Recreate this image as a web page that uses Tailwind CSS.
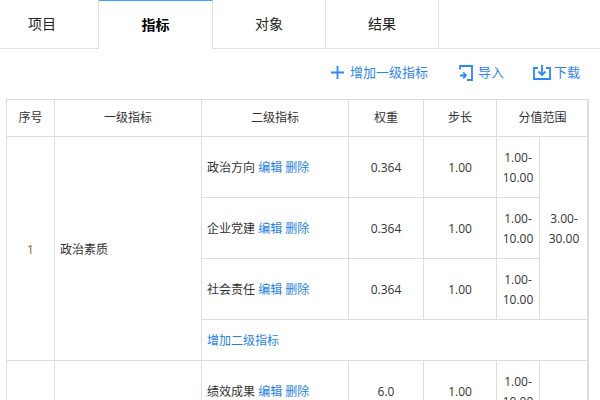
<!DOCTYPE html>
<html lang="zh-CN">
<head>
    <meta charset="UTF-8">
    <title>指标</title>
    <script src="https://cdn.jsdelivr.net/npm/@tailwindcss/browser@4"></script>
</head>
<body class="h-[400px] w-[600px] overflow-hidden bg-white font-['Open_Sans','Noto_Sans_CJK_SC',sans-serif] text-xs text-[#333]">
    <!-- Tabs -->
    <div class="flex h-[49px] border-b border-[#e0e0e0] text-sm text-[#222]">
        <div class="flex w-[99px] items-center justify-center border-r border-[#e0e0e0] pr-[14px] pb-[1px]">项目</div>
        <div class="-mb-px flex h-[49px] w-[114px] items-center justify-center border-t border-r border-t-[#409eff] border-r-[#e0e0e0] bg-white font-bold text-black">指标</div>
        <div class="flex w-[113px] items-center justify-center border-r border-[#e0e0e0] pb-[1px]">对象</div>
        <div class="flex w-[113px] items-center justify-center border-r border-[#e0e0e0] pb-[1px]">结果</div>
    </div>

    <!-- Toolbar -->
    <div class="flex h-[50px] items-center justify-end pr-[20px] pb-[2px] text-[13px] text-[#2f86ea]">
        <button class="flex items-center">
            <svg class="mr-[6px] h-[13px] w-[13px]" viewBox="0 0 13 13" fill="none" stroke="#2c8af0" stroke-width="1.8"><path d="M6.500 0v13M0 6.500h13"/></svg>
            增加一级指标
        </button>
        <button class="ml-[31px] flex items-center">
            <svg class="mr-[5px] h-[16px] w-[14px]" viewBox="0 0 14 16" fill="none" stroke="#2c8af0" stroke-width="1.8"><path d="M1 4.500V1h12v14H8"/><path d="M1 10.500h6M4.200 7.500 7 10.500l-2.800 3"/></svg>
            导入
        </button>
        <button class="ml-[29px] flex items-center">
            <svg class="mr-[3px] h-[15px] w-[18px]" viewBox="0 0 18 15" fill="none" stroke="#2c8af0" stroke-width="1.8"><path d="M5 3H1v11h16V3h-4"/><path d="M9 0v10M5.500 6.500 9 10l3.500-3.500"/></svg>
            下载
        </button>
    </div>

    <!-- Table -->
    <div class="ml-[6px] w-[583px] border-r-2 border-[#ddd]">
        <table class="w-[582px] table-fixed border-collapse [&_td]:border [&_td]:border-[#ddd] [&_th]:border [&_th]:border-[#ddd]">
            <colgroup>
                <col class="w-[48px]"><col class="w-[147px]"><col class="w-[147px]"><col class="w-[75px]"><col class="w-[73px]"><col class="w-[43px]"><col class="w-[49px]">
            </colgroup>
            <thead>
                <tr class="h-[37px] text-center font-normal">
                    <th class="font-normal">序号</th>
                    <th class="font-normal">一级指标</th>
                    <th class="font-normal">二级指标</th>
                    <th class="font-normal">权重</th>
                    <th class="font-normal">步长</th>
                    <th class="font-normal" colspan="2">分值范围</th>
                </tr>
            </thead>
            <tbody class="leading-[20px] [&_td]:pt-[2px]">
                <tr class="h-[61px]">
                    <td class="text-center text-[#8a5a20]" rowspan="4">1</td>
                    <td class="px-[5px]" rowspan="4">政治素质</td>
                    <td class="px-[5px]">政治方向 <a class="text-[#1f7fe8]">编辑</a> <a class="text-[#1f7fe8]">删除</a></td>
                    <td class="text-center">0.364</td>
                    <td class="text-center">1.00</td>
                    <td class="text-center">1.00-<br>10.00</td>
                    <td class="text-center" rowspan="3">3.00-<br>30.00</td>
                </tr>
                <tr class="h-[61px]">
                    <td class="px-[5px]">企业党建 <a class="text-[#1f7fe8]">编辑</a> <a class="text-[#1f7fe8]">删除</a></td>
                    <td class="text-center">0.364</td>
                    <td class="text-center">1.00</td>
                    <td class="text-center">1.00-<br>10.00</td>
                </tr>
                <tr class="h-[61px]">
                    <td class="px-[5px]">社会责任 <a class="text-[#1f7fe8]">编辑</a> <a class="text-[#1f7fe8]">删除</a></td>
                    <td class="text-center">0.364</td>
                    <td class="text-center">1.00</td>
                    <td class="text-center">1.00-<br>10.00</td>
                </tr>
                <tr class="h-[41px]">
                    <td class="px-[5px] text-[#1f7fe8]" colspan="5">增加二级指标</td>
                </tr>
                <tr class="h-[61px]">
                    <td></td>
                    <td></td>
                    <td class="px-[5px]">绩效成果 <a class="text-[#1f7fe8]">编辑</a> <a class="text-[#1f7fe8]">删除</a></td>
                    <td class="text-center">6.0</td>
                    <td class="text-center">1.00</td>
                    <td class="text-center">1.00-<br>10.00</td>
                    <td></td>
                </tr>
            </tbody>
        </table>
    </div>
</body>
</html>
